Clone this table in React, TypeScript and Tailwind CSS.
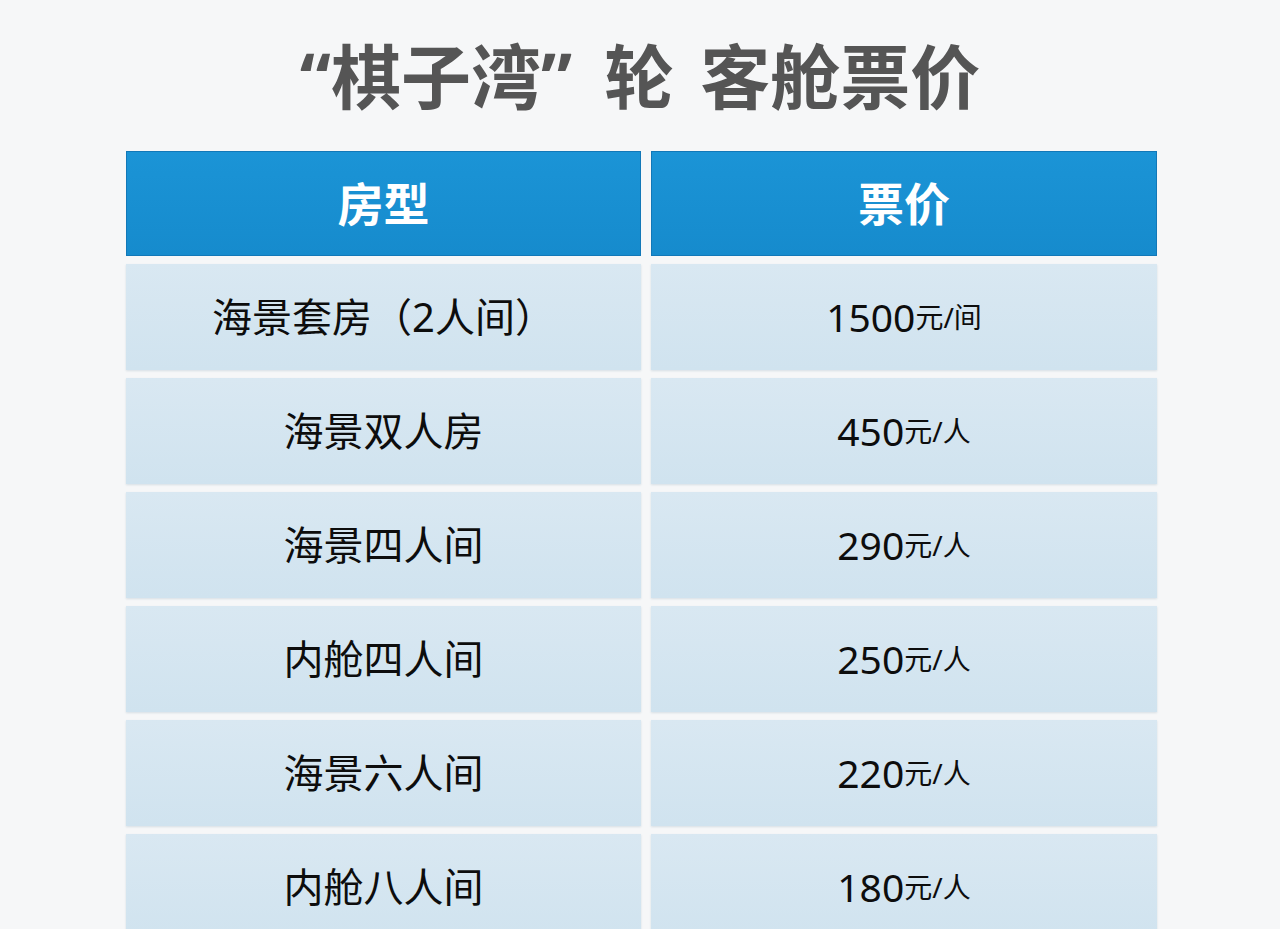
const rows: { name: string; price: string; unit: string }[] = [
  { name: '海景套房（2人间）', price: '1500', unit: '元/间' },
  { name: '海景双人房', price: '450', unit: '元/人' },
  { name: '海景四人间', price: '290', unit: '元/人' },
  { name: '内舱四人间', price: '250', unit: '元/人' },
  { name: '海景六人间', price: '220', unit: '元/人' },
  { name: '内舱八人间', price: '180', unit: '元/人' },
]

const font = { fontFamily: '"Noto Sans", "Noto Sans CJK SC", sans-serif' }

export default function App() {
  return (
    <div className="min-h-[929px] w-[1280px] overflow-hidden bg-[#f6f7f8]" style={font}>
      {/* Title */}
      <div className="flex h-[151px] items-start justify-center pt-[42px]">
        <h1 className="text-[70px] font-bold leading-none text-[#555555]">
          “棋子湾”<span className="inline-block w-[32px]" />轮<span className="inline-block w-[26px]" />客舱票价
        </h1>
      </div>

      {/* Table */}
      <div className="ml-[126px] grid grid-cols-[515px_506px] gap-x-[10px] gap-y-[8px]">
        <div className="flex h-[105px] items-center justify-center border border-[#1278b8] bg-gradient-to-b from-[#1b94d6] to-[#168bcd] text-[46px] font-bold text-white">
          房型
        </div>
        <div className="flex h-[105px] items-center justify-center border border-[#1278b8] bg-gradient-to-b from-[#1b94d6] to-[#168bcd] text-[46px] font-bold text-white">
          票价
        </div>

        {rows.map((r) => (
          <>
            <div
              key={r.name}
              className="flex h-[106px] items-center justify-center bg-gradient-to-b from-[#d9e8f2] to-[#d0e3ef] text-[40px] font-normal text-[#0d0d0d] shadow-[0_1px_2px_rgba(120,150,170,0.25)]"
            >
              {r.name}
            </div>
            <div
              key={r.name + '-p'}
              className="flex h-[106px] items-center justify-center bg-gradient-to-b from-[#d9e8f2] to-[#d0e3ef] text-[#0d0d0d] shadow-[0_1px_2px_rgba(120,150,170,0.25)]"
            >
              <span className="text-[39px] font-normal">{r.price}</span>
              <span className="text-[28px] font-normal">{r.unit}</span>
            </div>
          </>
        ))}
      </div>
    </div>
  )
}
